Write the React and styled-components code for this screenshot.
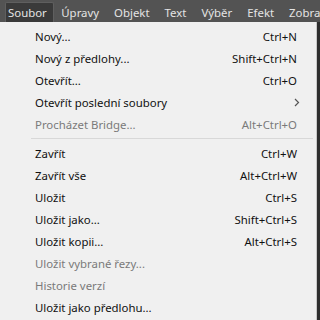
import React from "react";
import styled, { createGlobalStyle } from "styled-components";

const Global = createGlobalStyle`
  html, body { margin: 0; padding: 0; background: #2e2e2e; }
  body { font-family: "Noto Sans", "Open Sans", sans-serif; }
`;

const Page = styled.div`
  width: 320px;
  height: 320px;
  overflow: hidden;
  background: #2e2e2e;
`;

const MenuBar = styled.div`
  display: flex;
  align-items: flex-end;
  height: 22px;
  background: #535353;
  padding-left: 5px;
  box-sizing: border-box;
  white-space: nowrap;
  overflow: hidden;
`;

const BarItem = styled.div`
  flex: none;
  height: 20px;
  line-height: 19px;
  padding: ${p => (p.$active ? "0 6px 0 2px" : "0 6.5px")};
  font-size: 11.4px;
  color: #e4e4e4;
  box-sizing: border-box;
  background: ${p => (p.$active ? "#3a3a3a" : "transparent")};
  border: 1px solid ${p => (p.$active ? "#5f5f5f" : "transparent")};
  border-bottom: none;
  border-radius: 2px 2px 0 0;
`;

const Dropdown = styled.div`
  width: 317px;
  background: #f0f0f0;
  border-right: 1px solid #c8c8c8;
  box-sizing: border-box;
  padding-top: 3px;
  padding-bottom: 4px;
`;

const Row = styled.div`
  display: flex;
  align-items: center;
  height: 22px;
  padding-left: 35px;
  padding-right: 19px;
  font-size: 11.4px;
  color: ${p => (p.$disabled ? "#7a7a7a" : "#111111")};
`;

const Label = styled.span`
  flex: 1;
  white-space: nowrap;
`;

const Shortcut = styled.span`
  white-space: nowrap;
`;

const Arrow = styled.span`
  width: 14px;
  margin-right: -7px;
  display: flex;
  justify-content: center;
`;

const Separator = styled.div`
  height: 1px;
  background: #d8d8d8;
  margin: 3px 3px 3px 31px;
`;

const groups = [
  [
    { l: "Nový...", s: "Ctrl+N" },
    { l: "Nový z předlohy...", s: "Shift+Ctrl+N" },
    { l: "Otevřít...", s: "Ctrl+O" },
    { l: "Otevřít poslední soubory", sub: true },
    { l: "Procházet Bridge...", s: "Alt+Ctrl+O", d: true },
  ],
  [
    { l: "Zavřít", s: "Ctrl+W" },
    { l: "Zavřít vše", s: "Alt+Ctrl+W" },
    { l: "Uložit", s: "Ctrl+S" },
    { l: "Uložit jako...", s: "Shift+Ctrl+S" },
    { l: "Uložit kopii...", s: "Alt+Ctrl+S" },
    { l: "Uložit vybrané řezy...", d: true },
    { l: "Historie verzí", d: true },
    { l: "Uložit jako předlohu..." },
  ],
];

const bar = ["Soubor", "Úpravy", "Objekt", "Text", "Výběr", "Efekt", "Zobrazení"];

export default function App() {
  return (
    <Page>
      <Global />
      <MenuBar>
        {bar.map((b, i) => (
          <BarItem key={b} $active={i === 0}>{b}</BarItem>
        ))}
      </MenuBar>
      <Dropdown>
        {groups.map((g, gi) => (
          <React.Fragment key={gi}>
            {gi > 0 && <Separator />}
            {g.map(it => (
              <Row key={it.l} $disabled={it.d}>
                <Label>{it.l}</Label>
                {it.s && <Shortcut>{it.s}</Shortcut>}
                {it.sub && (
                  <Arrow>
                    <svg width="6" height="9" viewBox="0 0 6 9">
                      <path d="M1 1 L4.5 4.5 L1 8" fill="none" stroke="#555" strokeWidth="1.2" />
                    </svg>
                  </Arrow>
                )}
              </Row>
            ))}
          </React.Fragment>
        ))}
      </Dropdown>
    </Page>
  );
}
